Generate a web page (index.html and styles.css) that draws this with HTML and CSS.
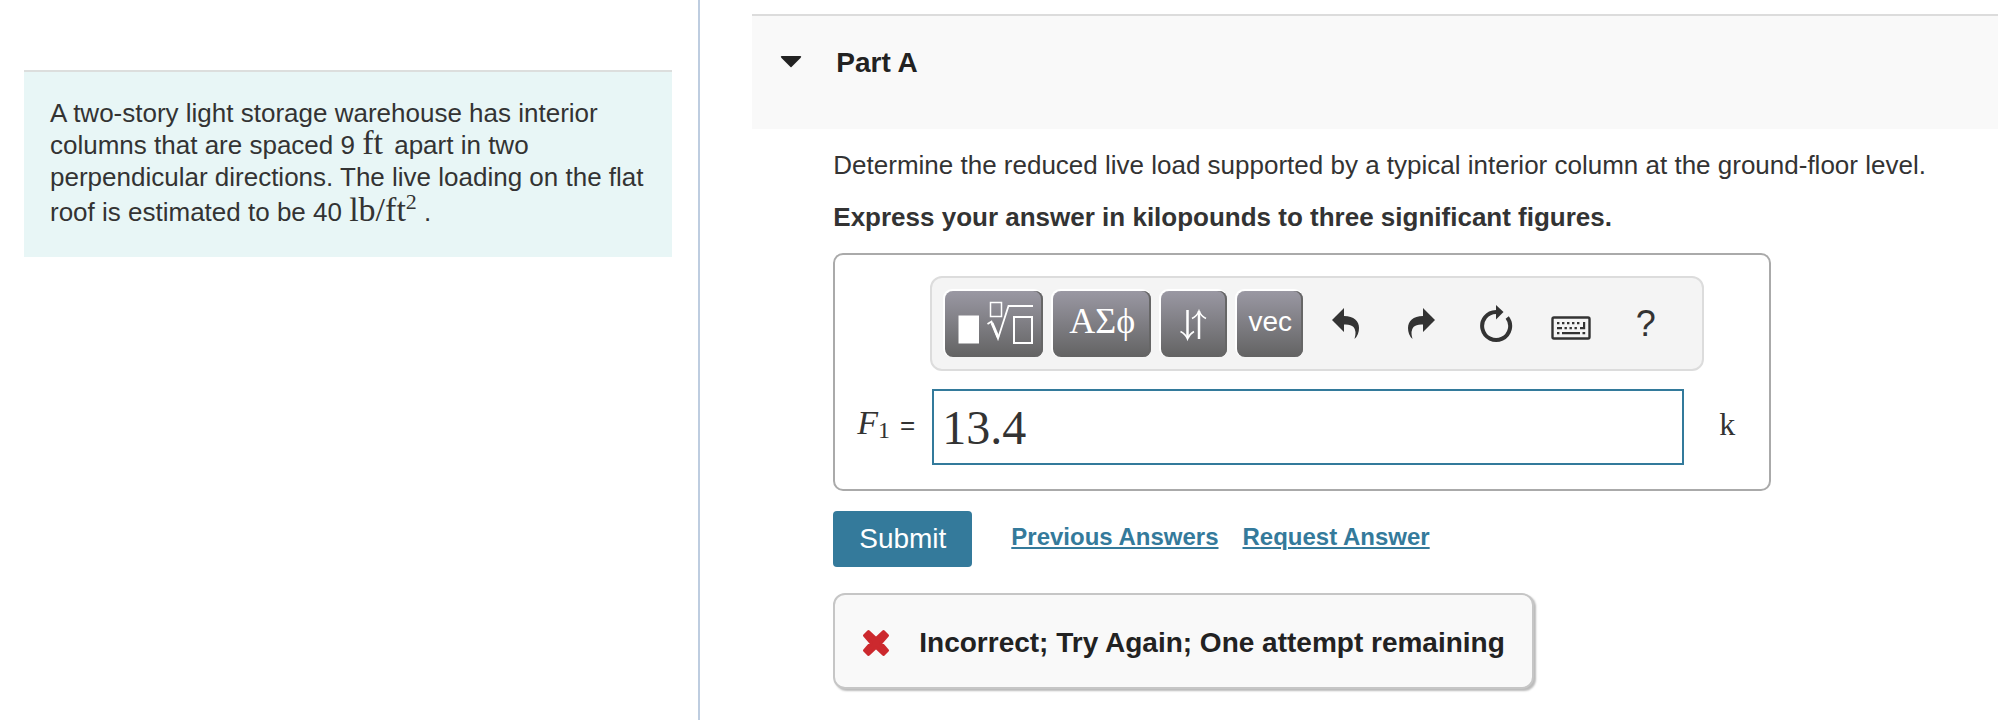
FILE: index.html
```html
<!DOCTYPE html>
<html lang="en">
<head>
<meta charset="utf-8">
<title>Part A</title>
<link rel="stylesheet" href="styles.css">
</head>
<body>
<div class="page">
  <aside class="intro">
    <p class="problem">A two-story light storage warehouse has interior columns that are spaced 9 <span class="math">ft</span> apart in two perpendicular directions. The live loading on the flat roof is estimated to be 40 <span class="math math-unit">lb/ft<sup>2</sup></span> .</p>
  </aside>
  <main class="part">
    <header class="part-header">
      <button class="toggle" type="button" aria-label="Collapse part" aria-expanded="true">
        <svg width="22" height="12" viewBox="0 0 22 12"><path d="M1.500 0h19Q22 .5 20.500 2L11.500 11Q11 11.500 10.500 11L1.500 2Q0 .5 1.500 0z"/></svg>
      </button>
      <h1 class="part-title">Part A</h1>
    </header>
    <div class="part-body">
      <p class="question">Determine the reduced live load supported by a typical interior column at the ground-floor level.</p>
      <p class="instruction">Express your answer in kilopounds to three significant figures.</p>
      <div class="answer">
        <div class="toolbar">
          <button class="key key-wide" type="button" aria-label="Templates">
            <svg class="line-icon" width="98" height="66" viewBox="0 0 98 66">
              <path d="M13.500 24.500h20.500v28H13.500z" fill="#fff" stroke="none"/>
              <path d="M45.500 11.500h11v14h-11z" stroke-width="1.500"/>
              <path d="M42.500 33l4-2.500 6.500 17L63.500 15H88" stroke-width="1.800"/>
              <path d="M47 32l6 14" stroke-width="3"/>
              <path d="M69 26h18v26H69z" stroke-width="2"/>
            </svg>
          </button>
          <button class="key key-wide key-greek" type="button">ΑΣϕ</button>
          <button class="key" type="button" aria-label="Arrows">
            <svg class="line-icon" width="66" height="66" viewBox="0 0 66 66">
              <path d="M26.500 19v28M38 48V20" stroke-width="2.500"/>
              <path d="M19.500 40.500Q24.500 43 26.500 48Q28.500 43 33 40.500M31 27.500Q36 25 38 20Q40 25 45 27.500" stroke-width="1.600"/>
            </svg>
          </button>
          <button class="key key-vec" type="button">vec</button>
          <button class="tool" type="button" aria-label="Undo">
            <svg width="28" height="32" viewBox="0 0 28 32"><path d="M0 12L12 0V8C22 8 27 13 27 20Q27 27 22.500 31Q25 23 21.500 19Q18.500 16 12 16.500V24z"/></svg>
          </button>
          <button class="tool" type="button" aria-label="Redo">
            <svg width="28" height="32" viewBox="0 0 28 32"><path d="M28 12L16 0V8C6 8 1 13 1 20Q1 27 5.500 31Q3 23 6.500 19Q9.500 16 16 16.500V24z"/></svg>
          </button>
          <button class="tool" type="button" aria-label="Reset">
            <svg width="34" height="38" viewBox="0 0 34 38"><path d="M17 7A14 14 0 1 0 28.200 12.400" fill="none" stroke="#333" stroke-width="4"/><path d="M17 0L24.500 7L17 14.500z"/></svg>
          </button>
          <button class="tool tool-keyboard" type="button" aria-label="Keyboard">
            <svg width="40" height="24" viewBox="0 0 40 24"><rect x="1.500" y="1.500" width="37" height="21" rx="1.500" fill="none" stroke="#333" stroke-width="2.400"/><path d="M6 6h2.400v2.200H6zM11 6h2.400v2.200H11zM16 6h2.400v2.200H16zM21 6h2.400v2.200H21zM26 6h2.400v2.200H26zM32 6h2.200v7.200H29V11h3zM6 11h5v2.200H6zM13.500 11h2.400v2.200h-2.400zM18.500 11h2.400v2.200h-2.400zM23.500 11h2.400v2.200h-2.400zM6 16h2.400v2.200H6zM11 16H29v2.200H11zM31.500 16h2.700v2.200h-2.700z"/></svg>
          </button>
          <button class="tool tool-help" type="button" aria-label="Help">?</button>
        </div>
        <div class="entry">
          <label class="entry-label" for="f1"><span class="symbol"><i>F</i><sub>1</sub></span><span>=</span></label>
          <input class="entry-input" id="f1" type="text" value="13.4">
          <span class="unit">k</span>
        </div>
      </div>
      <div class="actions">
        <button class="submit" type="submit">Submit</button>
        <nav class="links">
          <a href="#previous">Previous Answers</a>
          <a href="#request">Request Answer</a>
        </nav>
      </div>
      <div class="feedback" role="status">
        <svg class="cross" width="28" height="28" viewBox="0 0 28 28"><path d="M6.500 2.500L14 9.500L21.500 2.500L25.500 6.500L19 14L25.500 21.500L21.500 25.500L14 18.500L6.500 25.500L2.500 21.500L9 14L2.500 6.500z"/></svg>
        <span>Incorrect; Try Again; One attempt remaining</span>
      </div>
    </div>
  </main>
</div>
</body>
</html>
```
FILE: styles.css
```css
* { box-sizing: border-box; }
body {
  margin: 0;
  background: #fff;
  color: #333;
  font: 26px/32px "Liberation Sans", Arial, sans-serif;
}
p, h1 { margin: 0; }
button { margin: 0; padding: 0; border: 0; background: none; color: inherit; font: inherit; cursor: pointer; }
svg { display: block; fill: #333; }

.page { display: flex; min-height: 100vh; }
.intro {
  flex: 0 0 calc(35% + 1px);
  padding: 70px 26px 0 24px;
  border-right: 2px solid #becde0;
}
.problem {
  padding: 25px 24px 29px 26px;
  border-top: 2px solid #dcdedd;
  background: #e8f6f6;
}
.math { margin-right: 4px; font-family: "Liberation Serif", "Times New Roman", serif; font-size: 34px; line-height: 0; }
.math-unit { margin-right: 0; line-height: 34px; }
.math sup { font-size: 22px; line-height: 0; }

.part { flex: 1; min-width: 0; padding: 14px 0 0 52px; }
.part-header {
  display: flex;
  align-items: flex-start;
  gap: 34px;
  min-height: 115px;
  padding: 30px 28px;
  border-top: 2px solid #dcdcdc;
  background: #f9f9f9;
}
.toggle { height: 32px; display: flex; align-items: center; }
.toggle svg { fill: #222; }
.part-title { color: #222; font-size: 28px; line-height: 34px; }
.part-body { padding: 20px 48px 0 81px; }
.instruction { margin-top: 20px; font-weight: bold; }

.answer {
  max-width: 938px;
  margin-top: 20px;
  padding: 21px 22px 24px;
  border: 2px solid #aaa;
  border-radius: 10px;
}
.toolbar {
  display: flex;
  align-items: center;
  gap: 10px;
  height: 95px;
  margin: 0 43px 0 73px;
  padding: 0 13px;
  border: 2px solid #dcdcdc;
  border-radius: 12px;
  background: #f4f4f4;
}
.key {
  display: flex;
  align-items: center;
  justify-content: center;
  width: 66px;
  height: 66px;
  border-radius: 8px;
  background: linear-gradient(#9a98a3, #636363);
  box-shadow: -1px -1px 0 1px #fff, inset -2px 0 0 #666;
  color: #fff;
}
.key-wide { width: 98px; }
.key-greek { padding-bottom: 6px; font: 36px/40px "Liberation Serif", serif; }
.key-vec { padding-bottom: 4px; font-size: 28px; }
.line-icon { fill: none; stroke: #fff; }
.tool { display: flex; justify-content: center; align-items: center; width: 65px; height: 64px; }
.tool-keyboard { padding-top: 8px; }
.tool-help { font-size: 36px; }
.entry { display: flex; align-items: center; margin-top: 18px; }
.entry-label {
  display: flex;
  align-items: baseline;
  justify-content: space-between;
  width: 75px;
  padding: 0 17px 6px 0;
}
.symbol { font-family: "Liberation Serif", serif; font-size: 34px; }
.symbol sub { font-size: 24px; line-height: 0; vertical-align: -4px; }
.entry-input {
  flex: 1;
  min-width: 0;
  height: 76px;
  padding: 0 8px;
  border: 2px solid #337a9b;
  background: #fff;
  color: #333;
  font: 48px/60px "Liberation Serif", serif;
}
.unit { width: 63px; padding: 0 0 6px 35px; font: 32px/32px "Liberation Serif", serif; }

.actions { display: flex; align-items: center; gap: 39px; margin-top: 20px; }
.submit { width: 139px; height: 56px; border-radius: 4px; background: #347a9b; color: #fff; font-size: 28px; }
.links { display: flex; gap: 24px; padding-bottom: 4px; font-weight: bold; font-size: 24px; }
.links a { color: #347a9b; text-decoration-thickness: 2px; text-underline-offset: 2px; }
.feedback {
  display: flex;
  align-items: center;
  gap: 29px;
  width: fit-content;
  height: 96px;
  margin-top: 26px;
  padding: 4px 27px 0;
  border: 2px solid #c6c6c6;
  border-radius: 12px;
  background: #f9f9f9;
  box-shadow: 2px 2px 2px #bbb;
  color: #222;
  font-weight: bold;
  font-size: 28px;
}
.cross { fill: #cc292e; stroke: #cc292e; stroke-width: 3; stroke-linejoin: round; }
```
